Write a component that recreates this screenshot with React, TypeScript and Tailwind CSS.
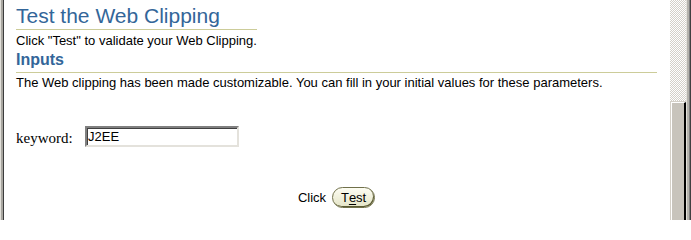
const sans = "font-['Liberation_Sans',Arial,sans-serif]";

const Scrollbar = () => (
  <div className="flex h-full w-[16px] shrink-0 flex-col">
    <div className="h-[101px] shrink-0 bg-[repeating-conic-gradient(#d4d0c8_0_25%,#ffffff_0_50%)] bg-[length:2px_2px]" />
    <div className="flex-1 border-t border-l border-t-[#d4d0c8] border-l-[#d4d0c8] bg-[#d4d0c8]">
      <div className="h-full border-t border-l border-r-2 border-t-white border-l-white border-r-[#000000] bg-[#c8c4bc]" />
    </div>
  </div>
);

const TestButton = () => (
  <button
    type="button"
    className={`${sans} flex h-[21px] w-[43px] items-center justify-center rounded-full border border-[#70704a] bg-gradient-to-b from-[#fdfdf3] to-[#e4e4c6] pb-[1px] text-[13px] leading-[15px] text-black shadow-[inset_-1px_-1px_0_#5a5a33]`}
  >
    T<span className="underline underline-offset-2">e</span>st
  </button>
);

export default function App() {
  return (
    <div className="flex h-[220px] w-[691px] overflow-hidden bg-white">
      {/* left frame */}
      <div className="w-[1px] shrink-0 bg-[#e2e0da]" />
      <div className="w-[2px] shrink-0 bg-[#a8a6a0]" />
      <div className="w-[1px] shrink-0 bg-[#3c3c3c]" />

      <div className="flex min-w-0 flex-1 flex-col pr-[13px] pl-[12px]">
        <div className="mt-[4px] w-fit">
          <h1
            className={`${sans} border-b border-[#cccc99] pb-[1px] text-[21px] leading-[24px] font-normal text-[#336699]`}
          >
            Test the Web Clipping
          </h1>
          <p className={`${sans} mt-[3px] text-[13px] leading-[15px] text-black`}>
            Click &quot;Test&quot; to validate your Web Clipping.
          </p>
        </div>

        <h2
          className={`${sans} mt-[2px] border-b border-[#cccc99] pb-[3px] text-[16px] leading-[19px] font-bold text-[#336699]`}
        >
          Inputs
        </h2>
        <p className={`${sans} mt-[2px] text-[13px] leading-[15px] text-black`}>
          The Web clipping has been made customizable. You can fill in your initial values for these
          parameters.
        </p>

        <div className="mt-[36px] flex items-start">
          <label
            htmlFor="keyword"
            className="mt-[4px] w-[69px] shrink-0 font-['Liberation_Serif','Times_New_Roman',serif] text-[15px] leading-[17px] text-black"
          >
            keyword:
          </label>
          <input
            id="keyword"
            defaultValue="J2EE"
            className={`${sans} h-[21px] w-[154px] border-2 border-t-[#808080] border-r-[#e4e2dc] border-b-[#e4e2dc] border-l-[#808080] bg-white pl-[1px] text-[13px] leading-[15px] text-black shadow-[inset_1px_1px_0_#404040] outline-none`}
          />
        </div>

        <div className="mt-[40px] flex items-center justify-center gap-[6px]">
          <span className={`${sans} text-[13px] leading-[15px] text-black`}>Click</span>
          <TestButton />
        </div>
      </div>

      <Scrollbar />

      {/* right frame */}
      <div className="w-[1px] shrink-0 bg-[#e2e0da]" />
      <div className="w-[2px] shrink-0 bg-[#b4b2ac]" />
      <div className="w-[1px] shrink-0 bg-[#808080]" />
      <div className="w-[1px] shrink-0 bg-[#404040]" />
    </div>
  );
}
